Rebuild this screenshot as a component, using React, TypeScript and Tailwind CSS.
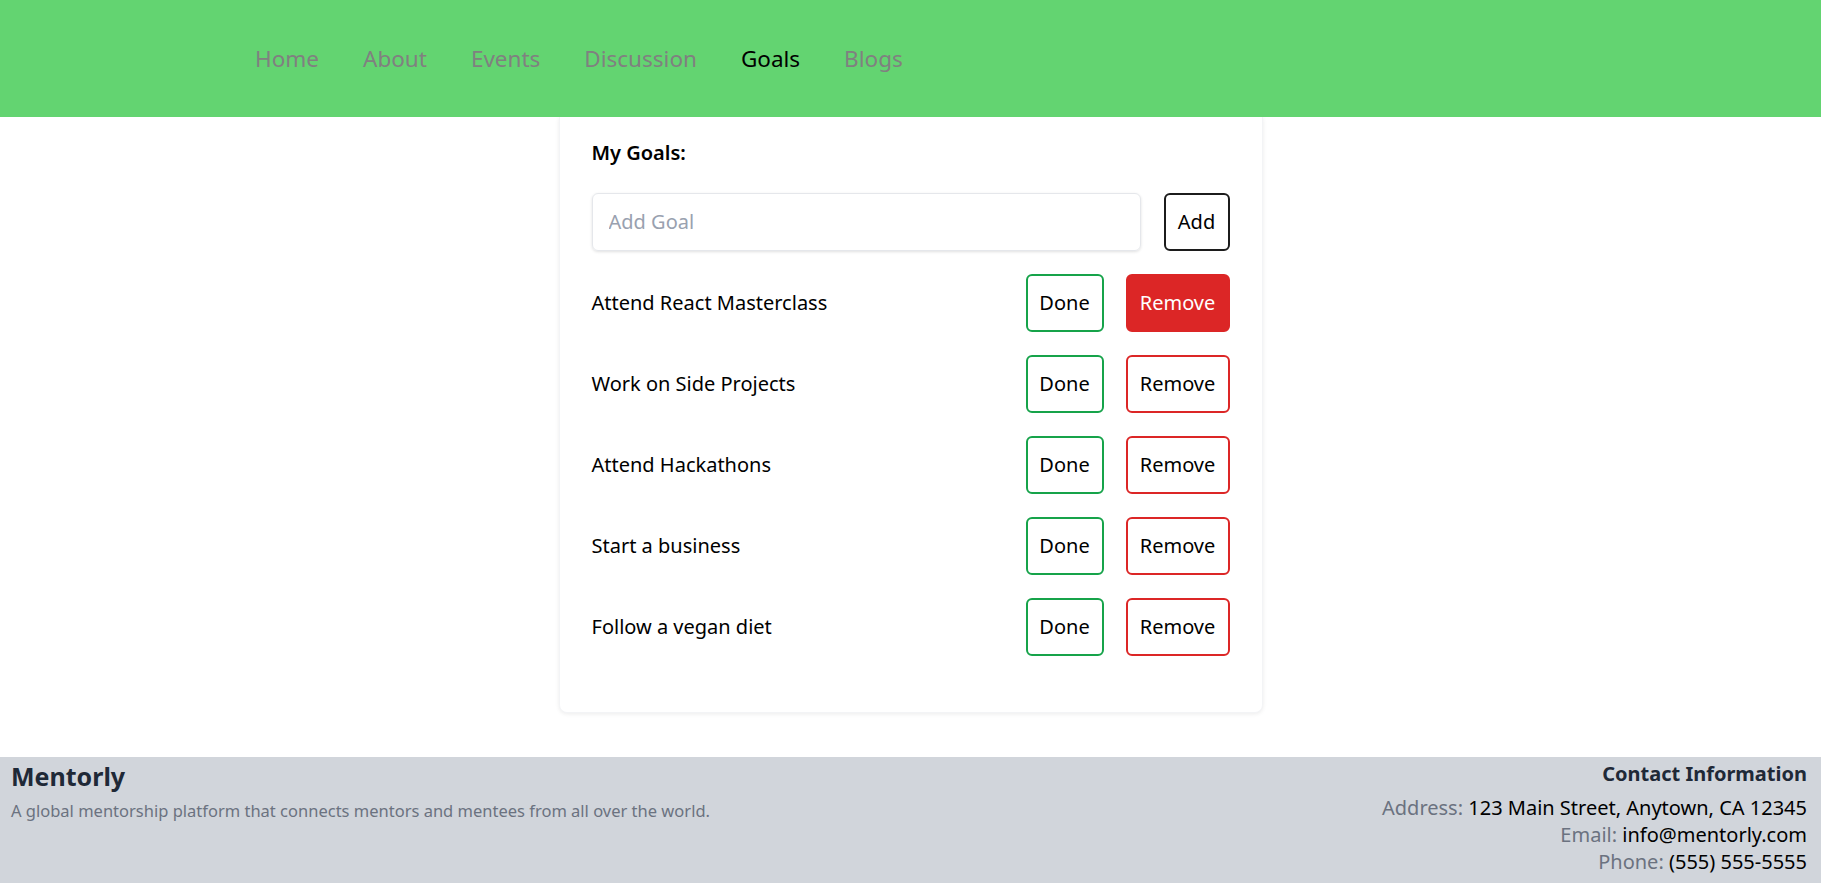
import { useState } from 'react';

const NAV = ['Home', 'About', 'Events', 'Discussion', 'Goals', 'Blogs'];

const INITIAL_GOALS = [
  'Attend React Masterclass',
  'Work on Side Projects',
  'Attend Hackathons',
  'Start a business',
  'Follow a vegan diet',
];

export default function App() {
  const [goals, setGoals] = useState(INITIAL_GOALS);
  const [text, setText] = useState('');

  const addGoal = () => {
    if (!text.trim()) return;
    setGoals(prev => [...prev, text.trim()]);
    setText('');
  };

  return (
    <div className="min-h-screen bg-white text-black font-['Noto_Sans',sans-serif]">
      {/* Navbar */}
      <nav className="relative z-10 h-[117px] bg-[#63d471] flex items-center pl-[255px] gap-[44px] text-[22.5px]">
        {NAV.map(item => (
          <a key={item} href="#" className={item === 'Goals' ? 'text-black' : 'text-[#808080]'}>
            {item}
          </a>
        ))}
      </nav>

      {/* Goals card */}
      <div className="mx-auto w-[704px] bg-white rounded-b-lg border border-t-0 border-gray-100 shadow-[0_1px_4px_rgba(0,0,0,0.08)] px-8 pt-[22px] pb-[56px]">
        <p className="text-xl leading-7 font-semibold mb-[26px]">My Goals:</p>

        <div className="flex gap-[23px] h-[58px]">
          <input
            value={text}
            onChange={e => setText(e.target.value)}
            placeholder="Add Goal"
            className="flex-1 min-w-0 border border-gray-200 rounded-md shadow-[0_1px_3px_rgba(0,0,0,0.12)] px-4 text-xl placeholder-gray-400 focus:outline-none"
          />
          <button onClick={addGoal} className="w-[66px] border-2 border-[#1c1c1c] rounded-md text-xl">
            Add
          </button>
        </div>

        {goals.map((goal, i) => (
          <div key={goal + i} className="mt-[23px] h-[58px] flex items-center justify-between">
            <span className="text-xl">{goal}</span>
            <div className="flex gap-[22px] h-full">
              <button className="w-[78px] border-2 border-[#16a34a] rounded-md text-xl">Done</button>
              <button
                onClick={() => setGoals(prev => prev.filter((_, j) => j !== i))}
                className={`w-[104px] border-2 border-[#dc2626] rounded-md text-xl ${
                  i === 0 ? 'bg-[#dc2626] text-white' : 'text-black'
                }`}
              >
                Remove
              </button>
            </div>
          </div>
        ))}
      </div>

      {/* Footer */}
      <footer className="mt-[44px] bg-[#d1d5db] flex justify-between pl-[11px] pr-[14px] pt-[3px] pb-3">
        <div>
          <h2 className="text-[25px] leading-8 font-bold text-[#1f2937]">Mentorly</h2>
          <p className="mt-[7px] text-[16.5px] text-[#6b7280]">
            A global mentorship platform that connects mentors and mentees from all over the world.
          </p>
        </div>
        <div className="text-right">
          <h3 className="text-xl leading-7 font-bold text-[#1f2937]">Contact Information</h3>
          <p className="mt-[6px] text-xl leading-[27px]">
            <span className="text-[#6b7280]">Address: </span>123 Main Street, Anytown, CA 12345
          </p>
          <p className="text-xl leading-[27px]">
            <span className="text-[#6b7280]">Email: </span>info@mentorly.com
          </p>
          <p className="text-xl leading-[27px]">
            <span className="text-[#6b7280]">Phone: </span>(555) 555-5555
          </p>
        </div>
      </footer>
    </div>
  );
}
